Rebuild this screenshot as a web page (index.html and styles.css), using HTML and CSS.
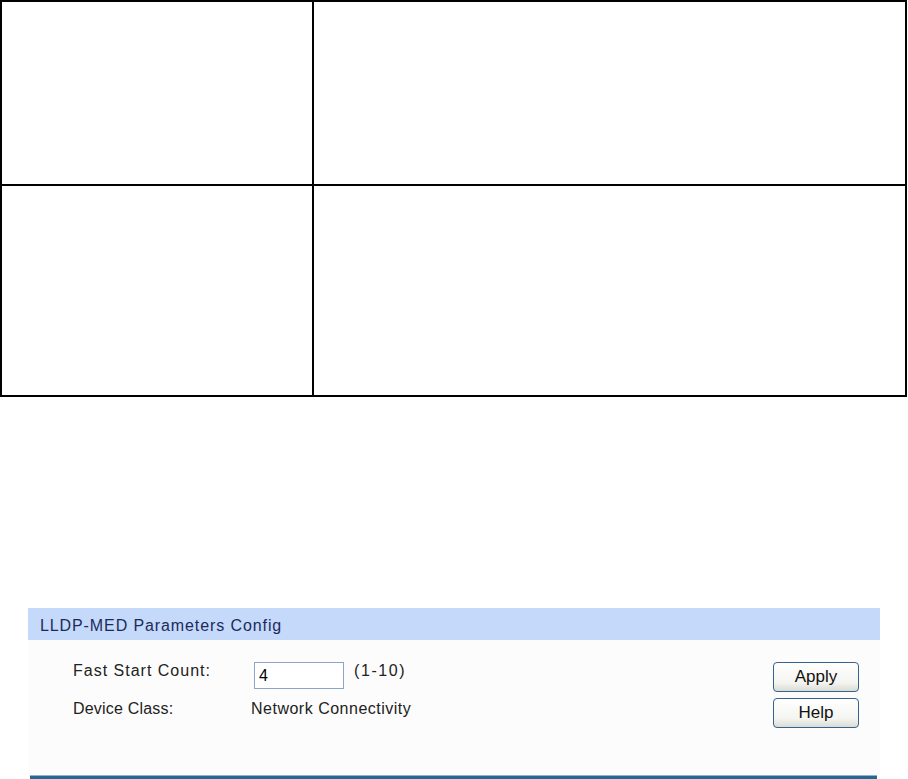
FILE: index.html
```html
<!DOCTYPE html>
<html>
<head>
<meta charset="utf-8">
<link rel="stylesheet" href="styles.css">
</head>
<body>
<table class="grid">
  <tr class="row1"><td class="c1"></td><td class="c2"></td></tr>
  <tr class="row2"><td class="c1"></td><td class="c2"></td></tr>
</table>
<div class="panel">
  <div class="panel-head">LLDP-MED Parameters Config</div>
  <div class="panel-body">
    <div class="fields">
      <div class="field field-count">
        <span class="label label-count">Fast Start Count:</span>
        <span class="input">4</span>
        <span class="hint">(1-10)</span>
      </div>
      <div class="field field-class">
        <span class="label label-class">Device Class:</span>
        <span class="value">Network Connectivity</span>
      </div>
    </div>
    <div class="buttons">
      <button class="btn">Apply</button>
      <button class="btn">Help</button>
    </div>
  </div>
  <div class="panel-foot"></div>
</div>
</body>
</html>
```
FILE: styles.css
```css
html, body {
  margin: 0;
  padding: 0;
  background: #ffffff;
}
body {
  font-family: "Liberation Sans", Arial, sans-serif;
  width: 908px;
  height: 779px;
  overflow: hidden;
}
.grid {
  border-collapse: collapse;
  width: 907px;
  margin: 0;
}
.grid td {
  border: 2px solid #000;
  padding: 0;
}
.grid .c1 { width: 310px; }
.row1 td { height: 182px; }
.row2 td { height: 209px; }
.panel {
  margin: 211px 0 0 28px;
  width: 852px;
}
.panel-head {
  box-sizing: border-box;
  height: 32px;
  padding: 3px 0 0 12px;
  background: #c5d9fa;
  color: #1c2a5a;
  font-size: 16px;
  line-height: 29px;
  letter-spacing: 0.9px;
}
.panel-body {
  background: #fcfcfc;
  height: 135px;
  display: flex;
  justify-content: space-between;
  padding: 22px 21px 0 45px;
  box-sizing: border-box;
}
.fields {
  display: flex;
  flex-direction: column;
  gap: 11px;
}
.field {
  display: flex;
  align-items: flex-start;
  font-size: 16px;
  line-height: 18px;
  color: #222;
}
.label {
  width: 181px;
}
.label-count { letter-spacing: 1px; }
.label-class { letter-spacing: 0.2px; }
.input {
  box-sizing: border-box;
  width: 90px;
  height: 27px;
  border: 1px solid #8aa7c7;
  background: #fff;
  padding-left: 4px;
  line-height: 25px;
  color: #000;
}
.hint {
  margin-left: 10px;
  letter-spacing: 1.6px;
}
.value {
  margin-left: -3px;
  letter-spacing: 0.5px;
}
.buttons {
  display: flex;
  flex-direction: column;
  gap: 6px;
}
.btn {
  width: 86px;
  height: 30px;
  border: 1px solid #35628f;
  border-radius: 4px;
  background: linear-gradient(#ffffff, #f4f4f0 70%, #dcdcd6);
  font-family: "Liberation Sans", Arial, sans-serif;
  font-size: 17px;
  color: #111;
  padding: 0;
}
.panel-foot {
  margin-left: 2px;
  width: 847px;
  height: 4px;
  background: #236891;
  border-top: 1px solid #8fb3cc;
}
```
